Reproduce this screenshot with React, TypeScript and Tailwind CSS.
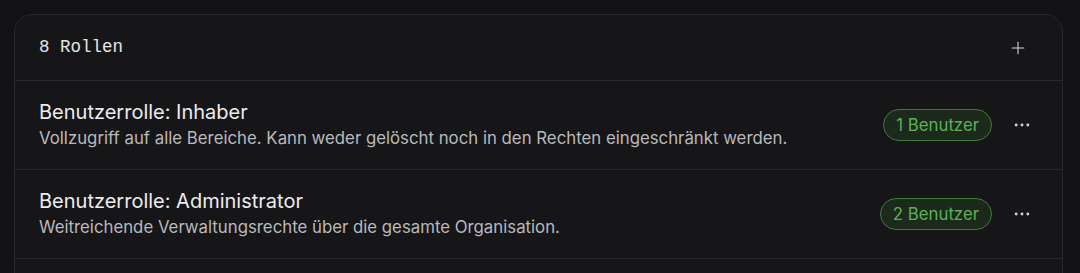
import { Plus, Ellipsis } from 'lucide-react';

const roles = [
  {
    name: 'Benutzerrolle: Inhaber',
    description: 'Vollzugriff auf alle Bereiche. Kann weder gelöscht noch in den Rechten eingeschränkt werden.',
    users: '1 Benutzer',
  },
  {
    name: 'Benutzerrolle: Administrator',
    description: 'Weitreichende Verwaltungsrechte über die gesamte Organisation.',
    users: '2 Benutzer',
  },
  {
    name: 'Benutzerrolle: Manager',
    description: 'Kann Teams und Projekte verwalten.',
    users: '3 Benutzer',
  },
];

export default function App() {
  return (
    <div className="min-h-screen bg-[#131315] pt-[14px] pl-[14px] font-['Inter',sans-serif]">
      <div className="w-[1049px] rounded-[18px] border border-[#28282b] bg-[#161618]">
        <div className="flex h-[66px] items-center justify-between border-b border-[#28282b] pl-6 pr-[34px]">
          <span className="font-['Liberation_Mono',monospace] text-[17.5px] text-[#e4e4e6]">8 Rollen</span>
          <Plus className="h-[20px] w-[20px] text-[#d8d8da]" strokeWidth={1.25} />
        </div>
        {roles.map((role) => (
          <div
            key={role.name}
            className="flex h-[89px] items-center justify-between border-b border-[#28282b] pl-6 pr-[30px]"
          >
            <div className="flex flex-col pt-[1px]">
              <span className="text-[20px] leading-[26px] text-[#ececee]">{role.name}</span>
              <span className="text-[16.8px] leading-[27px] text-[#b9b9bd]">{role.description}</span>
            </div>
            <div className="flex items-center gap-[20px]">
              <span className="rounded-full border border-[#3e7a3a] bg-[#1c2a1c] px-[12px] py-[4px] text-[16.8px] leading-[22px] text-[#5fb055]">
                {role.users}
              </span>
              <Ellipsis className="h-[20px] w-[20px] text-[#d8d8da]" strokeWidth={1.5} />
            </div>
          </div>
        ))}
      </div>
    </div>
  );
}
